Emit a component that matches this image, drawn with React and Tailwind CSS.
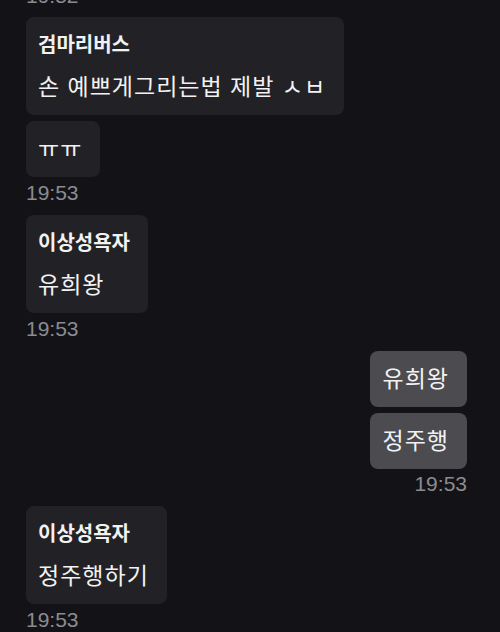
const messages = [
  { side: "left", name: "검마리버스", texts: ["손 예쁘게그리는법 제발 ㅅㅂ", "ㅠㅠ"], time: "19:53" },
  { side: "left", name: "이상성욕자", texts: ["유희왕"], time: "19:53" },
  { side: "right", texts: ["유희왕", "정주행"], time: "19:53" },
  { side: "left", name: "이상성욕자", texts: ["정주행하기"], time: "19:53" },
];

function Bubble({ name, text, mine }) {
  return (
    <div
      className={
        mine
          ? "rounded-lg bg-[#4b4b50] pl-[13px] pr-[18px] py-[14px]"
          : "rounded-lg bg-[#222226] pl-[12px] pr-[18px] py-[14px]"
      }
    >
      {name && (
        <div className="mb-[14px] text-[20px] font-bold leading-[28px] text-[#f2f2f2]">
          {name}
        </div>
      )}
      <div className="text-[23px] leading-[28px] tracking-[1px] text-[#f2f2f2]">{text}</div>
    </div>
  );
}

function Group({ side, name, texts, time }) {
  const mine = side === "right";
  return (
    <div className={mine ? "flex flex-col items-end" : "flex flex-col items-start"}>
      <div className={mine ? "flex flex-col items-end gap-[6px]" : "flex flex-col items-start gap-[6px]"}>
        {texts.map((t, i) => (
          <Bubble key={i} name={i === 0 ? name : null} text={t} mine={mine} />
        ))}
      </div>
      <div className={mine ? "mt-[3px] text-[21px] leading-[24px] text-[#8b8b90]" : "mt-[4px] text-[21px] leading-[24px] text-[#8b8b90]"}>
        {time}
      </div>
    </div>
  );
}

export default function App() {
  return (
    <div
      className="h-[632px] w-[500px] overflow-hidden bg-[#131317] pl-[26px] pr-[33px]"
      style={{ fontFamily: '"Liberation Sans", "Noto Sans CJK KR", sans-serif' }}
    >
      <div className="-mt-[16px] text-[21px] leading-[24px] text-[#8b8b90]">19:52</div>
      <div className="mt-[9px] flex flex-col gap-[10px]">
        {messages.map((m, i) => (
          <Group key={i} {...m} />
        ))}
      </div>
    </div>
  );
}
